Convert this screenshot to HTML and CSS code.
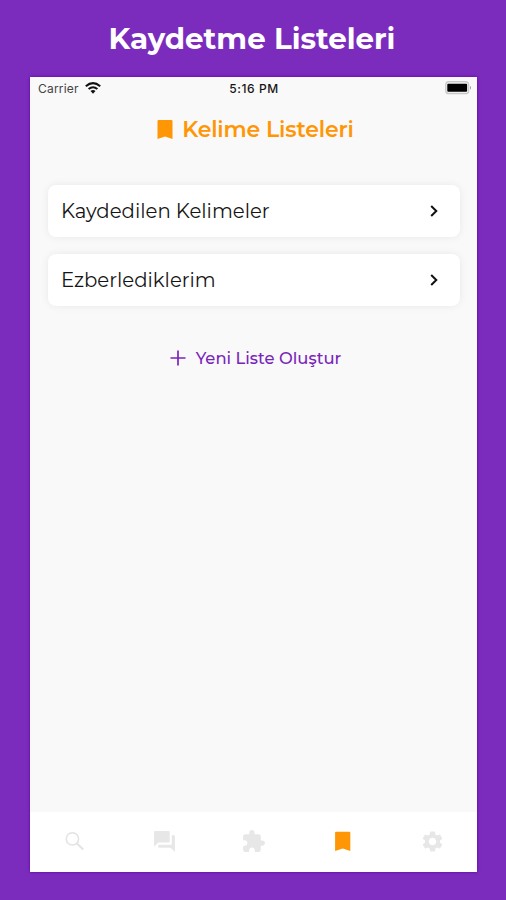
FILE: index.html
```html
<!DOCTYPE html>
<html lang="tr">
<head>
<meta charset="utf-8">
<title>Kaydetme Listeleri</title>
<link rel="stylesheet" href="styles.css">
</head>
<body>
<h1 class="headline"><span>Kaydetme Listeleri</span></h1>
<main class="phone">
  <div class="status">
    <div class="carrier"><span>Carrier</span>
      <svg class="wifi" viewBox="0 0 16 12"><g fill="none" stroke="#111" stroke-width="2"><path d="M.8 4.2Q8-2 15.2 4.2"/><path d="M3.6 7.1Q8 3.4 12.4 7.1"/></g><path fill="#111" d="M5.5 9Q8 6.9 10.5 9L8 11.7z"/></svg>
    </div>
    <span class="time">5:16 PM</span>
    <svg class="battery" viewBox="0 0 27 14"><rect x=".7" y=".7" width="23" height="12" rx="3.3" fill="#eee" stroke="#c7c7c7" stroke-width="1.2"/><rect x="2.3" y="2.8" width="19.8" height="8" rx="1" fill="#000"/><path d="M25 4.8q2 2 0 4z" fill="#999"/></svg>
  </div>
  <div class="title">
    <svg class="mark" viewBox="0 0 16 19"><path fill="#ff9605" d="M.5 1.2Q.5 0 1.7 0h12.6q1.2 0 1.2 1.2V19L8 16.5.5 19z"/></svg>
    <h2>Kelime Listeleri</h2>
  </div>
  <div class="lists">
    <div class="card"><span>Kaydedilen Kelimeler</span><svg class="chevron" viewBox="0 0 8 12"><path d="M1.2 1 6.3 6l-5.1 5" fill="none" stroke="#111" stroke-width="2"/></svg></div>
    <div class="card"><span>Ezberlediklerim</span><svg class="chevron" viewBox="0 0 8 12"><path d="M1.2 1 6.3 6l-5.1 5" fill="none" stroke="#111" stroke-width="2"/></svg></div>
  </div>
  <div class="create">
    <svg class="plus" viewBox="0 0 16 16"><path d="M8 .5v15M.5 8h15" stroke="#7a25ba" stroke-width="1.7"/></svg>
    <span>Yeni Liste Oluştur</span>
  </div>
  <nav class="tabs">
    <svg viewBox="0 0 24 24"><g fill="none" stroke="#e3e3e3"><circle cx="10" cy="9.5" r="5.9" stroke-width="1.5"/><path d="m14.3 13.8 6 5.8" stroke-width="2"/></g></svg>
    <svg viewBox="0 0 24 24"><path d="M21 6h-2v9H6v2c0 .55.45 1 1 1h11l4 4V7c0-.55-.45-1-1-1zm-4 6V3c0-.55-.45-1-1-1H3c-.55 0-1 .45-1 1v14l4-4h10c.55 0 1-.45 1-1z"/></svg>
    <svg viewBox="0 0 24 24"><path d="M20.5 11H19V7c0-1.1-.9-2-2-2h-4V3.5C13 2.12 11.88 1 10.5 1S8 2.12 8 3.5V5H4c-1.1 0-1.99.9-1.99 2v3.8H3.5c1.49 0 2.7 1.21 2.7 2.7s-1.21 2.7-2.7 2.7H2V20c0 1.1.9 2 2 2h3.8v-1.5c0-1.49 1.21-2.7 2.7-2.7 1.49 0 2.7 1.21 2.7 2.7V22H17c1.1 0 2-.9 2-2v-4h1.5c1.38 0 2.5-1.12 2.5-2.5S21.88 11 20.5 11z"/></svg>
    <svg class="active" viewBox="0 0 24 24"><path d="M4.9 3.4Q4.9 2.7 5.9 2.7h12.6q1 0 1 .7V21.2L12.2 18.8l-7.3 2.4z"/></svg>
    <svg viewBox="0 0 24 24"><path d="M19.14 12.94c.04-.3.06-.61.06-.94 0-.32-.02-.64-.07-.94l2.03-1.58c.18-.14.23-.41.12-.61l-1.92-3.32c-.12-.22-.37-.29-.59-.22l-2.39.96c-.5-.38-1.03-.7-1.62-.94l-.36-2.54c-.04-.24-.24-.41-.48-.41h-3.84c-.24 0-.43.17-.47.41l-.36 2.54c-.59.24-1.13.57-1.62.94l-2.39-.96c-.22-.08-.47 0-.59.22L2.74 8.87c-.12.21-.08.47.12.61l2.03 1.58c-.05.3-.09.63-.09.94s.02.64.07.94l-2.03 1.58c-.18.14-.23.41-.12.61l1.92 3.32c.12.22.37.29.59.22l2.39-.96c.5.38 1.03.7 1.62.94l.36 2.54c.05.24.24.41.48.41h3.84c.24 0 .44-.17.47-.41l.36-2.54c.59-.24 1.13-.56 1.62-.94l2.39.96c.22.08.47 0 .59-.22l1.92-3.32c.12-.22.07-.47-.12-.61l-2.01-1.58zM12 15.6c-1.98 0-3.6-1.62-3.6-3.6s1.62-3.6 3.6-3.6 3.6 1.62 3.6 3.6-1.62 3.6-3.6 3.6z"/></svg>
  </nav>
</main>
</body>
</html>
```
FILE: styles.css
```css
* { box-sizing: border-box; }
body {
  margin: 0;
  height: 900px;
  padding: 0 29px 28px 30px;
  display: flex;
  flex-direction: column;
  background: #7b2cbd;
  font-family: Montserrat, Inter, sans-serif;
  color: #151515;
  overflow: hidden;
}
svg { display: block; flex: none; }
h1, h2 { margin: 0; }
.headline {
  height: 77px;
  padding-right: 3px;
  text-align: center;
  color: #fff;
  font-size: 29.3px;
  font-weight: 700;
  line-height: 78px;
  white-space: nowrap;
}
.phone {
  flex: 1;
  display: flex;
  flex-direction: column;
  background: #f9f9f9;
  box-shadow: 0 0 3px #5e009f;
}
.status {
  height: 24px;
  padding: 0 5px 2px 8px;
  display: grid;
  grid-template-columns: 1fr auto 1fr;
  align-items: center;
  font-family: Inter, sans-serif;
  font-size: 12px;
}
.carrier { display: flex; align-items: center; gap: 6px; color: #444; letter-spacing: 0.2px; }
.wifi { width: 16px; height: 12px; }
.time { font-weight: 500; letter-spacing: 0.6px; margin-right: 2px; }
.battery { width: 27px; height: 14px; justify-self: end; }
.title {
  height: 56px;
  display: flex;
  justify-content: center;
  align-items: center;
  gap: 9px;
  padding-left: 4px;
  color: #ff9605;
}
.mark { width: 16px; height: 19px; }
.title h2 { font-size: 22px; font-weight: 600; letter-spacing: -0.15px; }
.lists { margin-top: 28px; padding: 0 17px 0 18px; display: grid; gap: 17px; }
.card {
  height: 52px;
  padding: 0 22px 0 13px;
  display: flex;
  align-items: center;
  justify-content: space-between;
  border-radius: 8px;
  background: #fff;
  box-shadow: 0 0 9px rgba(0, 0, 0, 0.07);
  font-size: 19.7px;
}
.chevron { width: 8px; height: 12px; }
.create {
  margin-top: 40px;
  height: 24px;
  display: flex;
  align-items: center;
  justify-content: center;
  gap: 10px;
  padding-left: 4px;
  color: #7a25ba;
  font-size: 16.4px;
  font-weight: 500;
}
.plus { width: 16px; height: 16px; }
.tabs {
  margin-top: auto;
  height: 60px;
  padding-bottom: 2px;
  display: grid;
  grid-template-columns: repeat(5, 1fr);
  place-items: center;
  background: #fff;
  fill: #e7e7e7;
}
.tabs svg { width: 25px; height: 25px; }
.tabs .active { fill: #ff9605; }
```
